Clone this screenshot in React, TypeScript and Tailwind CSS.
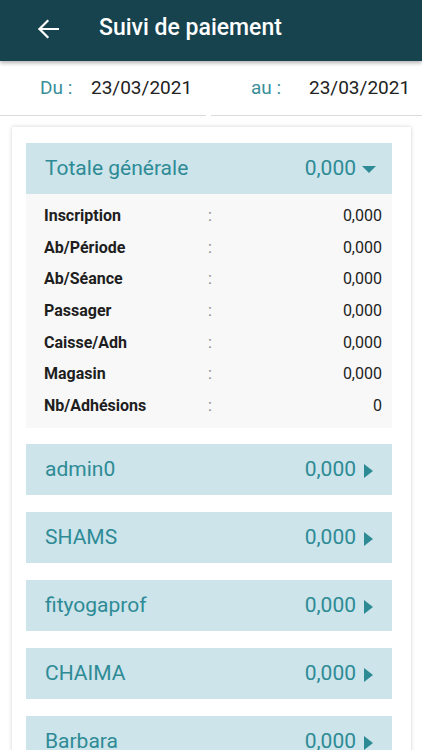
import React from "react";

const details: [string, string][] = [
  ["Inscription", "0,000"],
  ["Ab/Période", "0,000"],
  ["Ab/Séance", "0,000"],
  ["Passager", "0,000"],
  ["Caisse/Adh", "0,000"],
  ["Magasin", "0,000"],
  ["Nb/Adhésions", "0"],
];

const users = ["admin0", "SHAMS", "fityogaprof", "CHAIMA", "Barbara"];

function CaretDown() {
  return (
    <svg width="14" height="8" viewBox="0 0 14 8" className="ml-[6px] mt-[2px]">
      <path d="M0 0 L14 0 L7 7 Z" fill="#2e8b96" />
    </svg>
  );
}

function CaretRight() {
  return (
    <svg width="9" height="14" viewBox="0 0 9 14" className="ml-[8px] mt-[4px]">
      <path d="M0 0 L9 7 L0 14 Z" fill="#2e8b96" />
    </svg>
  );
}

export default function App() {
  return (
    <div
      className="w-[422px] h-[750px] overflow-hidden bg-white"
      style={{ fontFamily: "Roboto, 'Liberation Sans', sans-serif" }}
    >
      <div className="h-[61px] bg-[#17434f] flex items-center shadow-[0_2px_4px_rgba(0,0,0,0.3)] relative z-10">
        <svg width="22" height="20" viewBox="0 0 22 20" className="ml-[37px] mb-[4px]">
          <path d="M21 10 H2.5 M10.5 2 L2.5 10 L10.5 18" stroke="white" strokeWidth="2.2" fill="none" strokeLinecap="square" />
        </svg>
        <span className="ml-[40px] mb-[4px] text-white text-[23px] font-medium">Suivi de paiement</span>
      </div>
      <div className="h-[54px] flex items-center text-[19px]">
        <span className="ml-[40px] w-[51px] text-[#3a8e9a]">Du :</span>
        <span className="w-[160px] text-[#222]">23/03/2021</span>
        <span className="w-[58px] text-[#3a8e9a]">au :</span>
        <span className="text-[#222]">23/03/2021</span>
      </div>
      <div className="flex">
        <div className="w-[206px] h-px bg-[#dcdcdc]" />
        <div className="w-[5px]" />
        <div className="flex-1 h-px bg-[#dcdcdc]" />
      </div>
      <div className="ml-[12px] mr-[11px] mt-[11px] bg-white shadow-[0_0_4px_rgba(0,0,0,0.18)] pl-[14px] pr-[19px] pt-[16px] pb-[20px]">
        <div className="h-[51px] bg-[#cce4ea] flex items-center pl-[19px] pr-[16px] text-[#2e8b96]">
          <span className="text-[21px] flex-1">Totale générale</span>
          <span className="text-[21px]">0,000</span>
          <CaretDown />
        </div>
        <div className="bg-[#f8f8f8] pt-[6px] pb-[6px] pl-[18px] pr-[10px]">
          {details.map(([k, v]) => (
            <div key={k} className="h-[31.7px] flex items-center text-[16px] text-[#1e1e1e]">
              <span className="w-[164px] font-bold">{k}</span>
              <span className="text-[#888] flex-1">:</span>
              <span>{v}</span>
            </div>
          ))}
        </div>
        <div className="flex flex-col gap-[17px] mt-[16px]">
          {users.map((u) => (
            <div key={u} className="h-[51px] bg-[#cce4ea] flex items-center pl-[19px] pr-[19px] text-[#2e8b96]">
              <span className="text-[21px] flex-1">{u}</span>
              <span className="text-[21px]">0,000</span>
              <CaretRight />
            </div>
          ))}
        </div>
      </div>
    </div>
  );
}
